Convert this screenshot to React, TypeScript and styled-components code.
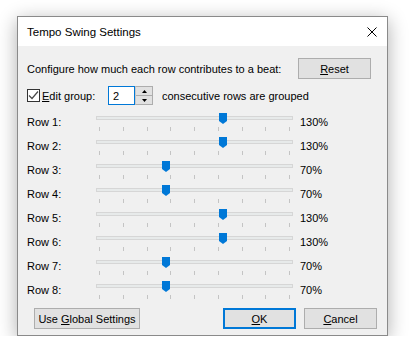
import React from "react";
import styled, { createGlobalStyle } from "styled-components";

const Global = createGlobalStyle`
  html, body { margin: 0; padding: 0; background: #ffffff; }
  body { font-family: "Liberation Sans", Arial, sans-serif; font-size: 11px; color: #000; }
`;

const Page = styled.div`
  padding: 16px 0 0 17px;
`;

const Window = styled.div`
  width: 371px;
  box-sizing: border-box;
  border: 1px solid #8a8a8a;
  background: #f0f0f0;
  box-shadow: 0 4px 18px rgba(0, 0, 0, 0.32);
`;

const TitleBar = styled.div`
  height: 29px;
  background: #ffffff;
  display: flex;
  align-items: center;
  justify-content: space-between;
  padding: 0 10px 0 9px;
`;

const Title = styled.span`
  font-size: 11.5px;
  line-height: 16px;
`;

const Body = styled.div`
  padding: 12px 10px 6px 9px;
  display: flex;
  flex-direction: column;
`;

const TopRow = styled.div`
  display: flex;
  align-items: center;
  justify-content: space-between;
  height: 21px;
  margin-right: 6px;
`;

const Button = styled.button<{ $default?: boolean; $width: number }>`
  width: ${(p) => p.$width}px;
  height: 21px;
  box-sizing: border-box;
  background: #e1e1e1;
  border: ${(p) => (p.$default ? "2px solid #0078d7" : "1px solid #adadad")};
  font: inherit;
  font-size: 11px;
  color: #000;
  padding: 0;
  white-space: nowrap;
  display: flex;
  align-items: center;
  justify-content: center;
`;

const EditRow = styled.div`
  margin-top: 7px;
  height: 19px;
  display: flex;
  align-items: center;
`;

const CheckLabel = styled.label`
  width: 81px;
  display: flex;
  align-items: center;
  gap: 2px;
`;

const CheckBox = styled.span`
  width: 13px;
  height: 13px;
  box-sizing: border-box;
  border: 1px solid #333333;
  background: #ffffff;
  display: flex;
  align-items: center;
  justify-content: center;
`;

const Spin = styled.div`
  display: flex;
  height: 19px;
`;

const SpinEdit = styled.div`
  width: 27px;
  box-sizing: border-box;
  border: 1px solid #0078d7;
  background: #fff;
  padding-left: 4px;
  display: flex;
  align-items: center;
`;

const SpinButtons = styled.div`
  width: 18px;
  box-sizing: border-box;
  border: 1px solid #adadad;
  border-left: 1px solid #c8c8c8;
  background: #e5e5e5;
  display: flex;
  flex-direction: column;
`;

const SpinHalf = styled.div<{ $top?: boolean }>`
  flex: 1;
  display: flex;
  align-items: center;
  justify-content: center;
  border-bottom: ${(p) => (p.$top ? "1px solid #adadad" : "none")};
  background: #e1e1e1;
`;

const EditText = styled.span`
  margin-left: 9px;
`;

const Rows = styled.div`
  margin-top: 5px;
  display: flex;
  flex-direction: column;
`;

const SliderRow = styled.div`
  display: grid;
  grid-template-columns: 69px 197px auto;
  height: 24px;
`;

const RowLabel = styled.span<{ $pad?: number }>`
  line-height: 16px;
  padding-top: 4px;
  padding-left: ${(p) => p.$pad ?? 0}px;
`;

const Slider = styled.div`
  position: relative;
  height: 24px;
`;

const Track = styled.div`
  position: absolute;
  left: 0;
  right: 0;
  top: 6px;
  height: 4px;
  box-sizing: border-box;
  background: #e7eaea;
  border: 1px solid #d6d6d6;
`;

const Ticks = styled.svg`
  position: absolute;
  left: 0;
  top: 17px;
`;

const Thumb = styled.svg`
  position: absolute;
  top: 3px;
`;

const Footer = styled.div`
  margin-top: 6px;
  display: flex;
  align-items: center;
  padding-left: 7px;
`;

const Spacer = styled.div`
  flex: 1;
`;

const FooterRight = styled.div`
  display: flex;
  gap: 8px;
`;

const values = [130, 130, 70, 70, 130, 130, 70, 70];

function SliderControl({ value }: { value: number }) {
  const center = 3.5 + (value / 200) * 190;
  const ticks = Array.from({ length: 9 }, (_, i) => Math.round(3 + i * 23.75) + 0.5);
  return (
    <Slider>
      <Track />
      <Ticks width="197" height="4">
        {ticks.map((x) => (
          <line key={x} x1={x} x2={x} y1={0} y2={4} stroke="#c4c4c4" strokeWidth="1" />
        ))}
      </Ticks>
      <Thumb width="8" height="11" style={{ left: Math.round(center - 4) }}>
        <polygon points="0,0 8,0 8,8 4,11 0,8" fill="#0078d7" />
      </Thumb>
    </Slider>
  );
}

export default function App() {
  return (
    <>
      <Global />
      <Page>
        <Window>
          <TitleBar>
            <Title>Tempo Swing Settings</Title>
            <svg width="10" height="10" viewBox="0 0 10 10">
              <path d="M0.5 0.5 L9.5 9.5 M9.5 0.5 L0.5 9.5" stroke="#000" strokeWidth="1" />
            </svg>
          </TitleBar>
          <Body>
            <TopRow>
              <span>Configure how much each row contributes to a beat:</span>
              <Button $width={73}>
                <span><u>R</u>eset</span>
              </Button>
            </TopRow>
            <EditRow>
              <CheckLabel>
                <CheckBox>
                  <svg width="11" height="11" viewBox="0 0 11 11">
                    <path d="M1 5.5 L4 8.5 L10 1.5" fill="none" stroke="#4a4a4a" strokeWidth="1.2" />
                  </svg>
                </CheckBox>
                <span><u>E</u>dit group:</span>
              </CheckLabel>
              <Spin>
                <SpinEdit>2</SpinEdit>
                <SpinButtons>
                  <SpinHalf $top>
                    <svg width="5" height="3" viewBox="0 0 5 3"><polygon points="2.5,0 5,3 0,3" fill="#000" /></svg>
                  </SpinHalf>
                  <SpinHalf>
                    <svg width="5" height="3" viewBox="0 0 5 3"><polygon points="0,0 5,0 2.5,3" fill="#000" /></svg>
                  </SpinHalf>
                </SpinButtons>
              </Spin>
              <EditText>consecutive rows are grouped</EditText>
            </EditRow>
            <Rows>
              {values.map((v, i) => (
                <SliderRow key={i}>
                  <RowLabel>Row {i + 1}:</RowLabel>
                  <SliderControl value={v} />
                  <RowLabel $pad={7}>{v}%</RowLabel>
                </SliderRow>
              ))}
            </Rows>
            <Footer>
              <Button $width={106}>
                <span>Use <u>G</u>lobal Settings</span>
              </Button>
              <Spacer />
              <FooterRight>
                <Button $width={73} $default>
                  <span><u>O</u>K</span>
                </Button>
                <Button $width={73}>
                  <span><u>C</u>ancel</span>
                </Button>
              </FooterRight>
            </Footer>
          </Body>
        </Window>
      </Page>
    </>
  );
}
